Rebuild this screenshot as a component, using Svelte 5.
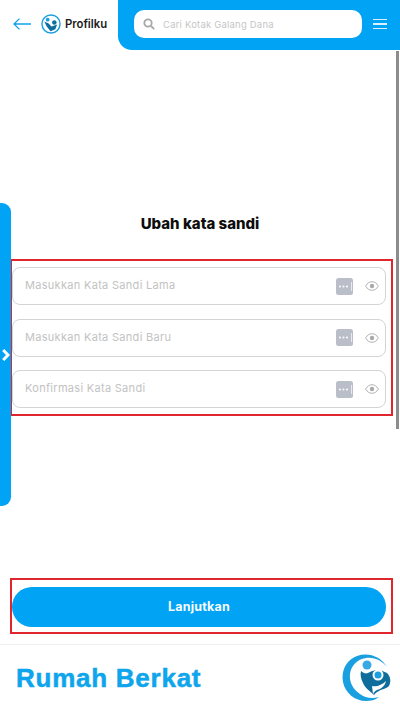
<script>
  const fields = ['Masukkan Kata Sandi Lama', 'Masukkan Kata Sandi Baru', 'Konfirmasi Kata Sandi'];
</script>

<div class="page">
  <header class="header">
    <div class="left">
      <svg class="back" width="18" height="12" viewBox="0 0 18 12" fill="none" stroke="#0ca4ee" stroke-width="1.300"><path d="M18 6H1M6.500.6 1 6l5.500 5.400"/></svg>
      <svg class="mini" width="20" height="20" viewBox="0 0 21 21">
        <circle cx="10.500" cy="10.500" r="9.500" fill="#fff" stroke="#1a9fe0" stroke-width="1.500"/>
        <circle cx="7" cy="6" r="2" fill="#1a9fe0"/>
        <circle cx="14" cy="9" r="2.400" fill="#0e6f9e"/>
        <path d="M3.500 8 8 10l3 3 6-2-2 5-5 2-4-5z" fill="#0e6f9e"/>
      </svg>
      <span class="title">Profilku</span>
    </div>
    <div class="panel">
      <div class="search">
        <svg width="12" height="12" viewBox="0 0 12 12" fill="none" stroke="#a8a8a8" stroke-width="1.800"><circle cx="5" cy="5" r="3.700"/><path d="m8 8 3.200 3.200"/></svg>
        <span>Cari Kotak Galang Dana</span>
      </div>
      <div class="burger"><i></i><i></i><i></i></div>
    </div>
  </header>

  <main class="main">
    <h1>Ubah kata sandi</h1>
    <div class="outline fields">
      {#each fields as f}
        <div class="field">
          <span class="ph">{f}</span>
          <span class="dots">
            <svg width="17" height="17" viewBox="0 0 17 17"><rect width="17" height="17" rx="2.500" fill="#b9bec8"/><rect x="15" y="4" width="1" height="9" fill="#e8eaee"/><circle cx="4" cy="8.500" r="1" fill="#fff"/><circle cx="7.500" cy="8.500" r="1" fill="#fff"/><circle cx="11" cy="8.500" r="1" fill="#fff"/></svg>
          </span>
          <svg class="eye" width="14" height="10" viewBox="0 0 14 10" fill="none"><path d="M.6 5C2.400 2 4.600.7 7 .7S11.600 2 13.400 5C11.600 8 9.400 9.300 7 9.300S2.400 8 .6 5Z" stroke="#a9a9a9" stroke-width=".9"/><circle cx="7" cy="5" r="2.200" fill="#a9a9a9"/></svg>
        </div>
      {/each}
    </div>
  </main>

  <div class="outline action">
    <button class="cta">Lanjutkan</button>
  </div>

  <footer class="footer">
    <span class="brand">Rumah Berkat</span>
    <svg width="50" height="50" viewBox="0 0 50 50">
      <path d="M45 14C39 4 27-1 15 3 4 7-1 18 1 29c2 11 12 19 23 19 5 0 9-1 13-4-7 2-14 1-19-3C11 36 7 29 8 21 9 13 15 6 24 5c9-1 16 3 21 9Z" fill="#1a9fe0"/>
      <path d="M19 18c3 3 6 3 9 1 5-3 12-2 17 1 4 4 4 9 2 13-3 3-7 3-10 5-2 1-4 2-5 4-4-4-9-7-11-12-2-4-3-8-2-12Z" fill="#0f6d9c"/>
      <circle cx="25" cy="12" r="4.500" fill="#39a9e6"/>
      <circle cx="36" cy="22" r="5.500" fill="#fff"/>
      <circle cx="36" cy="22" r="3.500" fill="#1a9fe0"/>
      <path d="M30 33c5 1 10-1 14-5-1 5-5 8-9 9-2 1-3 2-4 4z" fill="#fff"/>
    </svg>
  </footer>

  <div class="tab">
    <svg width="8" height="12" viewBox="0 0 8 12" fill="none" stroke="#fff" stroke-width="3"><path d="m1.200 1 4.800 5-4.800 5"/></svg>
  </div>
  <div class="scrollbar"></div>
</div>

<style>
  :global(body) { margin: 0; background: #fff; }
  .page {
    position: relative;
    width: 400px;
    height: 711px;
    overflow: hidden;
    display: flex;
    flex-direction: column;
    background: #fff;
    font-family: "Inter", "Open Sans", sans-serif;
  }
  .header { display: flex; height: 50px; flex: none; }
  .left { width: 118px; display: flex; align-items: center; padding: 0 0 3px 13px; box-sizing: border-box; }
  .back { margin-right: 10px; }
  .mini { margin-right: 4px; }
  .title { font-size: 11.300px; font-weight: 600; color: #1a1a1a; }
  .panel {
    flex: 1;
    background: #01a3f5;
    border-bottom-left-radius: 14px;
    display: flex;
    align-items: center;
    padding: 0 13px 2px 16px;
  }
  .search {
    width: 228px;
    height: 28px;
    background: #fff;
    border-radius: 10px;
    display: flex;
    align-items: center;
    gap: 8px;
    padding-left: 9px;
    box-sizing: border-box;
    font-size: 9.500px;
    color: #c6c6c6;
    letter-spacing: .2px;
  }
  .burger { margin-left: 11px; width: 14px; display: flex; flex-direction: column; gap: 3px; }
  .burger i { display: block; height: 1.500px; background: #d8f2ff; }
  .main { flex: 1; display: flex; flex-direction: column; align-items: center; min-height: 0; padding-top: 165px; }
  h1 { margin: 0 0 26px; font-size: 15px; line-height: 18px; font-weight: 800; color: #0d0d0d; }
  .outline { border: 2px solid #e0262c; box-sizing: border-box; }
  .fields {
    width: 383px;
    margin-left: 3px;
    padding: 6px 5px 6px 0;
    display: flex;
    flex-direction: column;
    gap: 13.500px;
  }
  .field {
    height: 38px;
    border: 1px solid #d2d4d6;
    border-radius: 8px;
    display: flex;
    align-items: center;
    padding: 0 6px 0 12px;
    box-sizing: border-box;
  }
  .ph { flex: 1; font-size: 11px; color: #c2c2c2; letter-spacing: .3px; position: relative; top: -1px; }
  .dots { display: flex; margin-right: 12px; }
  .eye { display: block; }
  .action {
    width: 383px;
    height: 56px;
    margin: 0 0 10px 10px;
    padding: 7px 5px 0 0;
    flex: none;
  }
  .cta {
    display: block;
    width: 374px;
    height: 40px;
    padding: 0 0 2px;
    border: 0;
    border-radius: 20px;
    background: #01a3f5;
    color: #f7fcff;
    font: 700 12.500px "Inter", sans-serif;
    letter-spacing: .2px;
  }
  .footer {
    flex: none;
    height: 67px;
    border-top: 1px solid #f0f0f0;
    box-sizing: border-box;
    display: flex;
    align-items: center;
    justify-content: space-between;
    padding: 0 8px 0 16px;
  }
  .brand {
    font: 700 26px "Liberation Sans", sans-serif;
    color: #0ea5ec;
    letter-spacing: .75px;
    -webkit-text-stroke: .5px #0ea5ec;
  }
  .tab {
    position: absolute;
    left: 0;
    top: 203px;
    width: 11px;
    height: 303px;
    background: #01a3f5;
    border-radius: 0 9px 9px 0;
  }
  .tab svg { position: absolute; left: 2px; top: 146px; }
  .scrollbar { position: absolute; right: 1px; top: 51px; width: 3px; height: 378px; background: #8c8c8c; }
</style>
